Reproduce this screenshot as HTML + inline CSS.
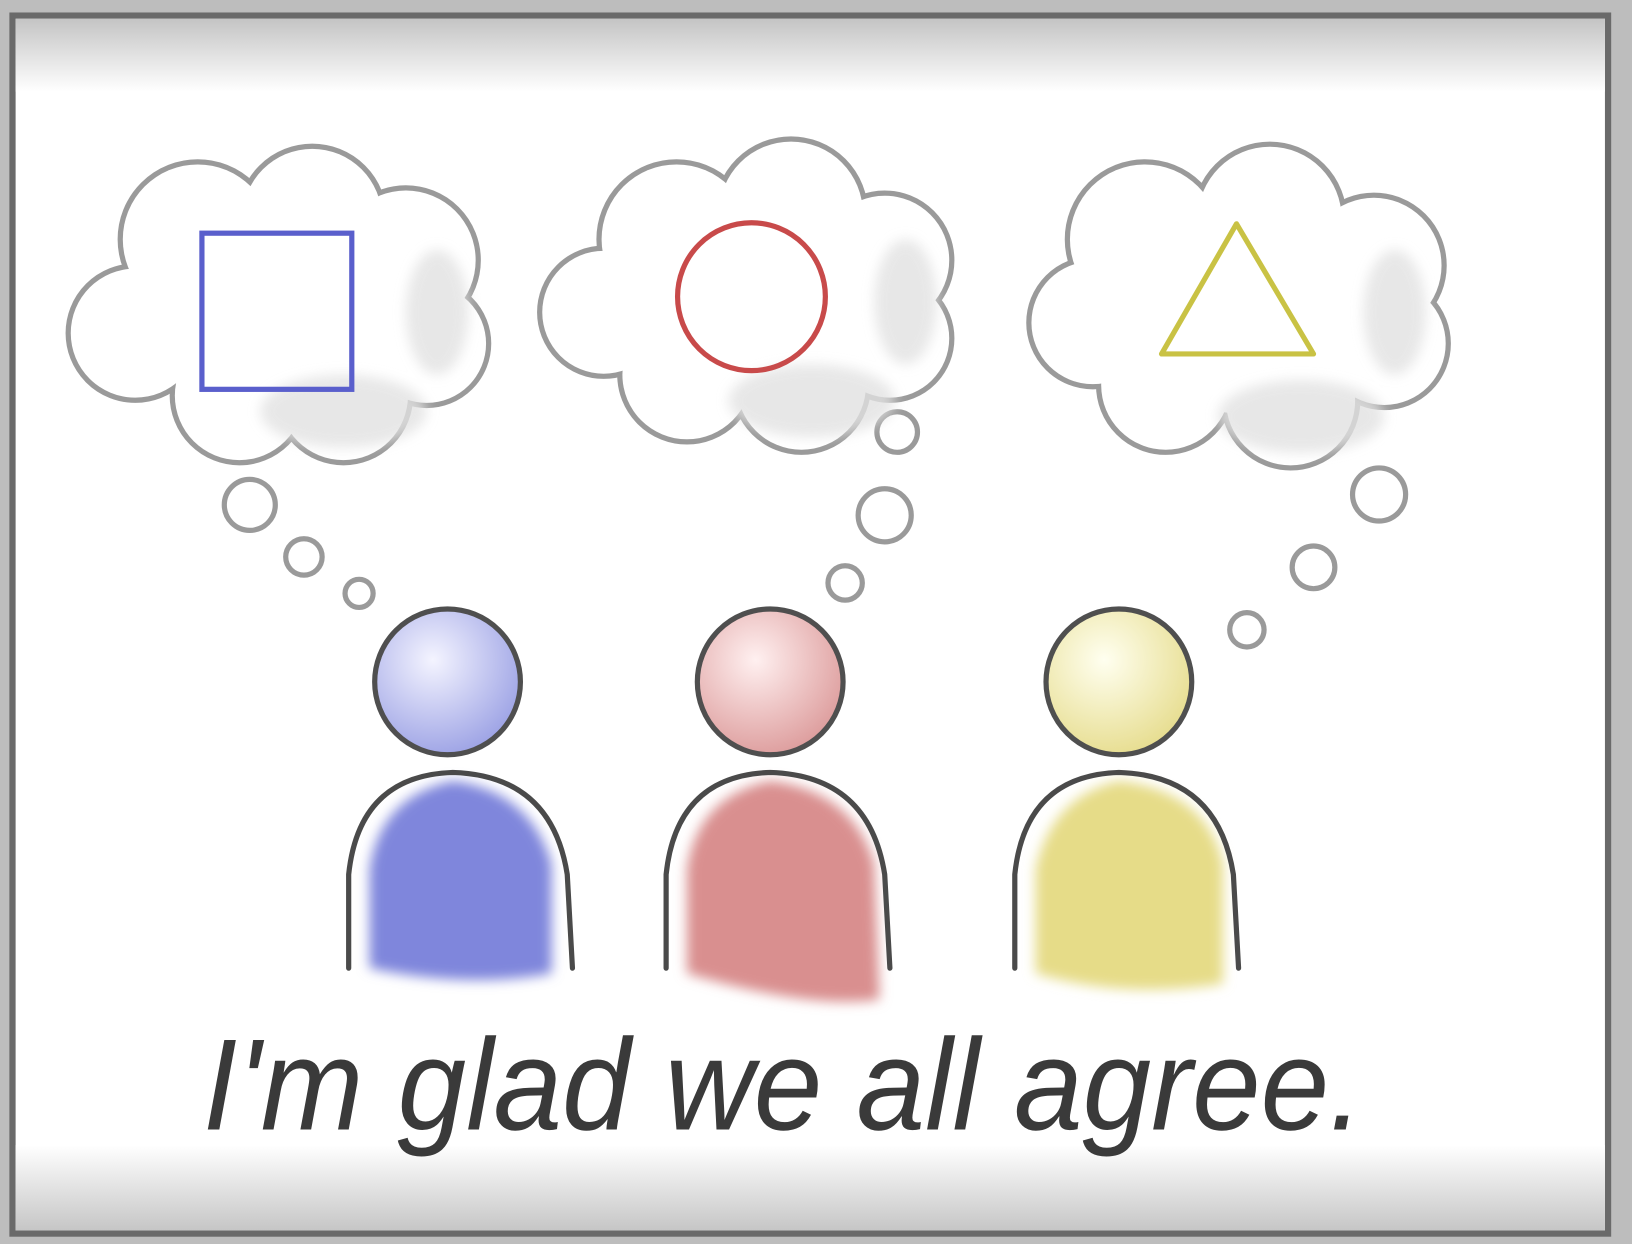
<!DOCTYPE html>
<html><head><meta charset="utf-8"><style>
html,body{margin:0;padding:0;background:#bdbdbd;}
svg{display:block;}
</style></head><body>
<svg width="1632" height="1244" viewBox="0 0 1568 1195" preserveAspectRatio="none" xmlns="http://www.w3.org/2000/svg">
<defs>
<linearGradient id="top" x1="0" y1="0" x2="0" y2="1"><stop offset="0" stop-color="#c4c4c4"/><stop offset="1" stop-color="#ffffff"/></linearGradient>
<linearGradient id="bot" x1="0" y1="0" x2="0" y2="1"><stop offset="0" stop-color="#ffffff"/><stop offset="1" stop-color="#c6c6c6"/></linearGradient>
<radialGradient id="hb" cx="0.4" cy="0.35" r="0.7"><stop offset="0" stop-color="#f4f4ff"/><stop offset="1" stop-color="#9aa0e4"/></radialGradient>
<radialGradient id="hr" cx="0.4" cy="0.35" r="0.7"><stop offset="0" stop-color="#fff0f0"/><stop offset="1" stop-color="#dc9a9a"/></radialGradient>
<radialGradient id="hy" cx="0.4" cy="0.35" r="0.7"><stop offset="0" stop-color="#fffff0"/><stop offset="1" stop-color="#e6dc8c"/></radialGradient>
<filter id="blur"><feGaussianBlur stdDeviation="6"/></filter>
</defs>
<rect x="0" y="0" width="1568" height="1195" fill="#bdbdbd"/>
<rect x="12" y="15" width="1533" height="1170" fill="#fff" stroke="#6a6a6a" stroke-width="6"/>
<rect x="15" y="18" width="1527" height="70" fill="url(#top)"/>
<rect x="15" y="1100" width="1527" height="82" fill="url(#bot)"/>

<g stroke="#9a9a9a" stroke-width="4" fill="#9a9a9a">
<circle cx="190" cy="230" r="75"/><circle cx="300" cy="210" r="70"/><circle cx="390" cy="250" r="70"/><circle cx="410" cy="330" r="60"/><circle cx="330" cy="380" r="65"/><circle cx="230" cy="380" r="65"/><circle cx="130" cy="320" r="65"/><circle cx="270" cy="300" r="100"/>
<circle cx="650" cy="230" r="75"/><circle cx="760" cy="205" r="72"/><circle cx="850" cy="250" r="65"/><circle cx="855" cy="325" r="60"/><circle cx="770" cy="370" r="65"/><circle cx="660" cy="360" r="65"/><circle cx="580" cy="300" r="62"/><circle cx="720" cy="290" r="100"/>
<circle cx="1100" cy="230" r="75"/><circle cx="1220" cy="210" r="72"/><circle cx="1320" cy="255" r="68"/><circle cx="1330" cy="330" r="62"/><circle cx="1240" cy="385" r="65"/><circle cx="1120" cy="370" r="65"/><circle cx="1050" cy="310" r="62"/><circle cx="1190" cy="300" r="100"/>
<circle cx="240" cy="485" r="25"/><circle cx="292" cy="535" r="18"/><circle cx="345" cy="570" r="14"/>
<circle cx="862" cy="415" r="20"/><circle cx="850" cy="495" r="26"/><circle cx="812" cy="560" r="17"/>
<circle cx="1325" cy="475" r="26"/><circle cx="1262" cy="545" r="21"/><circle cx="1198" cy="605" r="17"/>
</g>
<g fill="#fff">
<circle cx="190" cy="230" r="72"/><circle cx="300" cy="210" r="67"/><circle cx="390" cy="250" r="67"/><circle cx="410" cy="330" r="57"/><circle cx="330" cy="380" r="62"/><circle cx="230" cy="380" r="62"/><circle cx="130" cy="320" r="62"/><circle cx="270" cy="300" r="97"/>
<circle cx="650" cy="230" r="72"/><circle cx="760" cy="205" r="69"/><circle cx="850" cy="250" r="62"/><circle cx="855" cy="325" r="57"/><circle cx="770" cy="370" r="62"/><circle cx="660" cy="360" r="62"/><circle cx="580" cy="300" r="59"/><circle cx="720" cy="290" r="97"/>
<circle cx="1100" cy="230" r="72"/><circle cx="1220" cy="210" r="69"/><circle cx="1320" cy="255" r="65"/><circle cx="1330" cy="330" r="59"/><circle cx="1240" cy="385" r="62"/><circle cx="1120" cy="370" r="62"/><circle cx="1050" cy="310" r="59"/><circle cx="1190" cy="300" r="97"/>
<circle cx="240" cy="485" r="22"/><circle cx="292" cy="535" r="15"/><circle cx="345" cy="570" r="11"/>
<circle cx="862" cy="415" r="17"/><circle cx="850" cy="495" r="23"/><circle cx="812" cy="560" r="14"/>
<circle cx="1325" cy="475" r="23"/><circle cx="1262" cy="545" r="18"/><circle cx="1198" cy="605" r="14"/>
</g>
<g filter="url(#blur)" fill="#e2e2e2" opacity="0.8">
<ellipse cx="330" cy="395" rx="80" ry="35"/><ellipse cx="420" cy="300" rx="30" ry="60"/>
<ellipse cx="780" cy="385" rx="80" ry="35"/><ellipse cx="870" cy="290" rx="30" ry="60"/>
<ellipse cx="1250" cy="400" rx="80" ry="35"/><ellipse cx="1340" cy="300" rx="30" ry="60"/>
</g>

<rect x="194" y="224" width="144" height="150" fill="none" stroke="#5a5fcc" stroke-width="5"/>
<circle cx="722" cy="285" r="71" fill="none" stroke="#c84a4a" stroke-width="5"/>
<polygon points="1188,215 1116,340 1262,340" fill="none" stroke="#c9c244" stroke-width="5" stroke-linejoin="round"/>

<g filter="url(#blur)">
<path d="M355,930 L355,835 Q365,765 435,750 Q510,760 530,830 L530,935 Q450,950 355,930Z" fill="#7f86dc"/>
<path d="M660,930 L660,835 Q670,765 740,750 Q820,760 840,830 L845,960 Q780,970 660,935Z" fill="#d98f8f"/>
<path d="M995,935 L995,835 Q1010,765 1075,750 Q1160,760 1175,830 L1175,945 Q1080,960 995,935Z" fill="#e6dc88"/>
</g>
<g fill="none" stroke="#4a4a4a" stroke-width="5" stroke-linecap="round">
<path d="M335,930 L335,840 Q345,745 435,742 Q530,745 545,840 L550,930"/>
<path d="M640,930 L640,840 Q650,745 740,742 Q835,745 850,840 L855,930"/>
<path d="M975,930 L975,840 Q985,745 1075,742 Q1170,745 1185,840 L1190,930"/>
</g>
<circle cx="430" cy="655" r="70" fill="url(#hb)" stroke="#4f4f4f" stroke-width="5"/>
<circle cx="740" cy="655" r="70" fill="url(#hr)" stroke="#4f4f4f" stroke-width="5"/>
<circle cx="1075" cy="655" r="70" fill="url(#hy)" stroke="#4f4f4f" stroke-width="5"/>

<text x="195" y="1085" font-family="Liberation Sans, sans-serif" font-style="italic" font-size="125" fill="#3a3a3a" textLength="1115" lengthAdjust="spacingAndGlyphs">I'm glad we all agree.</text>
</svg>
</body></html>
